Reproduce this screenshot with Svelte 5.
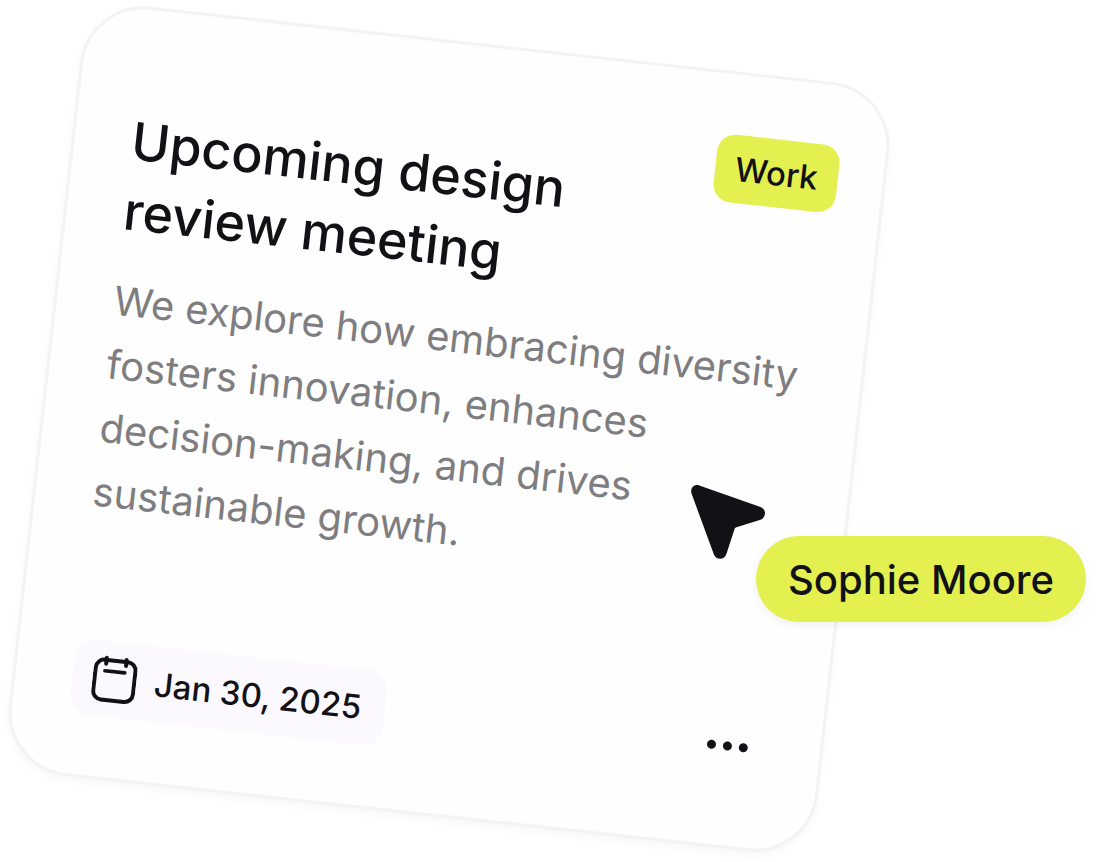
<script>
    let task = {
        title: ['Upcoming design', 'review meeting'],
        text: [
            'We explore how embracing diversity',
            'fosters innovation, enhances',
            'decision-making, and drives',
            'sustainable growth.'
        ],
        tag: 'Work',
        date: 'Jan 30, 2025',
        iso: '2025-01-30'
    };

    let user = 'Sophie Moore';
</script>

<main class="board">
    <article class="card">
        <header class="card-head">
            <h2>
                {#each task.title as line}
                    <span class="line">{line}</span>
                {/each}
            </h2>
            <span class="tag">{task.tag}</span>
        </header>

        <p class="text">
            {#each task.text as line}
                <span class="line">{line}</span>
            {/each}
        </p>

        <footer class="card-foot">
            <div class="date">
                <svg width="44" height="48" viewBox="0 0 44 48" fill="none" stroke="#121116" stroke-width="4" stroke-linecap="round" aria-hidden="true">
                    <rect x="2" y="5" width="40" height="40" rx="8.500" />
                    <path d="M12 3v6M32 3v6" />
                    <path d="M11.500 16h20" stroke-width="3.600" />
                </svg>
                <time datetime={task.iso}>{task.date}</time>
            </div>
            <button class="more" aria-label="More options">
                <span class="dot"></span>
                <span class="dot"></span>
                <span class="dot"></span>
            </button>
        </footer>
    </article>

    <!-- Live cursor of the other user -->
    <div class="cursor">
        <svg class="pointer" width="76" height="76" viewBox="0 0 76 76" aria-hidden="true">
            <path fill="#121116" d="M8.300 0.500 L69.500 22 C75.500 24.200 75.500 32.500 69.500 34.700 L45.500 42.200 C44.500 42.500 43.800 43.200 43.500 44.200 L35.300 69.200 C33.200 75.200 25 75.200 22.800 69.200 L0.600 8.700 C-1.200 3.500 3 -1.300 8.300 0.500 Z" />
        </svg>
        <span class="name">{user}</span>
    </div>
</main>

<style>
    :global(body) {
        margin: 0;
        background: #fff;
        overflow: hidden;
    }

    .board {
        position: relative;
        box-sizing: border-box;
        max-width: 1097px;
        padding: 42px;
        font-family: Inter, 'Liberation Sans', sans-serif;
        color: #121116;
    }

    .card {
        box-sizing: border-box;
        width: 100%;
        max-width: 814px;
        padding: 60px 57px;
        border: 3px solid #f3f2f5;
        border-radius: 64px;
        background: #fefefe;
        box-shadow: 0 4px 8px rgba(20, 16, 40, 0.03);
        transform: rotate(6.3deg);
    }

    .line {
        display: block;
        white-space: nowrap;
    }

    .card-head {
        display: flex;
        justify-content: space-between;
        align-items: flex-start;
        margin-right: -12px;
    }

    h2 {
        margin: 38px 0 0;
        font-size: 52px;
        font-weight: 500;
        line-height: 70px;
    }

    .tag {
        padding: 0 20px;
        border-radius: 18px;
        background: #e3f04f;
        font-size: 33px;
        font-weight: 500;
        line-height: 68px;
    }

    .text {
        margin: 23px 0 0;
        font-size: 40px;
        line-height: 64px;
        color: #7e7d80;
    }

    .card-foot {
        display: flex;
        justify-content: space-between;
        align-items: center;
        margin-top: 115px;
    }

    .date {
        display: flex;
        align-items: center;
        gap: 18px;
        padding: 0 24px 0 20px;
        border-radius: 20px;
        background: #fbf9fd;
        font-size: 33px;
        font-weight: 500;
        line-height: 76px;
    }

    .more {
        display: flex;
        gap: 7px;
        padding: 12px 15px 16px;
        border: 0;
        background: none;
        cursor: pointer;
    }

    .dot {
        width: 9px;
        height: 9px;
        border-radius: 50%;
        background: #121116;
    }

    .cursor {
        position: absolute;
        top: 485px;
        left: 691px;
        display: flex;
        align-items: flex-start;
    }

    .pointer {
        flex: none;
        margin-right: -11px;
    }

    .name {
        margin-top: 51px;
        padding: 2px 32px 0;
        border-radius: 43px;
        background: #e3f04f;
        box-shadow: 0 3px 8px rgba(20, 16, 40, 0.06);
        font-size: 40px;
        font-weight: 500;
        line-height: 84px;
        white-space: nowrap;
    }
</style>
